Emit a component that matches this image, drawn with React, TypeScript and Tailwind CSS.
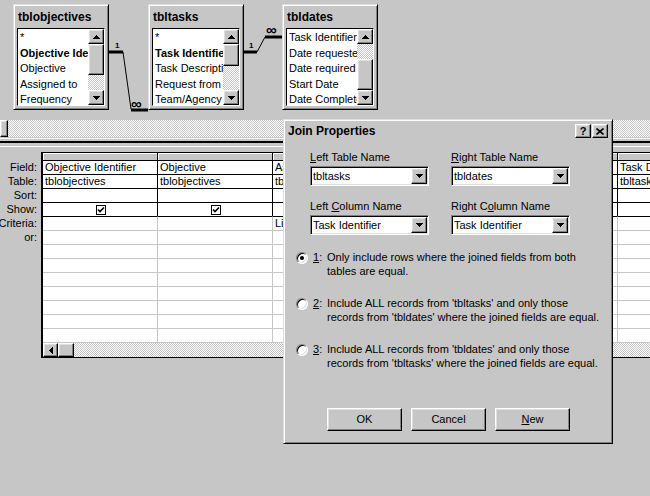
import type { ReactNode } from 'react'

// Win95-style bevels
const raised =
    'border border-t-white border-l-white border-r-black border-b-black shadow-[inset_-1px_-1px_#808080,inset_1px_1px_#dfdfdf]'
const sunken =
    'border border-t-[#808080] border-l-[#808080] border-r-white border-b-white shadow-[inset_1px_1px_#000,inset_-1px_-1px_#dfdfdf]'
const windowEdge =
    'border border-t-[#dfdfdf] border-l-[#dfdfdf] border-r-black border-b-black shadow-[inset_1px_1px_#fff,inset_-1px_-1px_#808080]'
const checker = 'bg-[repeating-conic-gradient(#ffffff_0%_25%,#c6c6c6_0%_50%)] bg-size-[2px_2px]'

function Arrow({ dir }: { dir: 'up' | 'down' | 'left' }) {
    if (dir === 'left') {
        return (
            <svg width="4" height="7" viewBox="0 0 4 7" shapeRendering="crispEdges">
                <polygon points="4,0 4,7 0,3.5" fill="#000" />
            </svg>
        )
    }
    return (
        <svg width="7" height="4" viewBox="0 0 7 4" shapeRendering="crispEdges">
            <polygon points={dir === 'up' ? '3.5,0 7,4 0,4' : '0,0 7,0 3.5,4'} fill="#000" />
        </svg>
    )
}

interface TableBoxProps {
    className: string
    title: string
    fields: string[]
    boldIndex?: number
    // heights: track above thumb, thumb, track below thumb
    track: [number, number, number]
}

function TableBox({ className, title, fields, boldIndex, track }: TableBoxProps) {
    const [before, thumb, after] = track
    return (
        <div className={`absolute top-[4px] w-[96px] bg-[#c6c6c6] px-[3px] pb-[3px] ${windowEdge} ${className}`}>
            <div className="h-[23px] pl-[1px] pt-[5px] text-[12px] font-bold leading-[14px]">{title}</div>
            <div className="flex h-[78px] border border-t-black border-l-black border-r-white border-b-white bg-white">
                <div className="min-w-0 flex-1 overflow-hidden pt-[1px]">
                    {fields.map((f, i) => (
                        <div
                            key={f}
                            className={`h-[15.5px] whitespace-nowrap pl-[2px] leading-[15.5px] ${i === boldIndex ? 'font-bold' : ''}`}
                        >
                            {f}
                        </div>
                    ))}
                </div>
                <div className="flex w-[16px] flex-col">
                    <div className={`flex h-[15px] items-center justify-center bg-[#c6c6c6] ${raised}`}>
                        <Arrow dir="up" />
                    </div>
                    <div className={checker} style={{ height: before }} />
                    <div className={`bg-[#c6c6c6] ${raised}`} style={{ height: thumb }} />
                    <div className={checker} style={{ height: after }} />
                    <div className={`flex h-[15px] items-center justify-center bg-[#c6c6c6] ${raised}`}>
                        <Arrow dir="down" />
                    </div>
                </div>
            </div>
        </div>
    )
}

function UpperPane() {
    return (
        <div className="relative h-[120px]">
            {/* join lines between the tables */}
            <svg className="absolute left-0 top-0" width="650" height="120">
                <g stroke="#000" fill="none">
                    <path d="M108 52H123" strokeWidth="3" />
                    <path d="M123 52L131 109" strokeWidth="1" />
                    <path d="M131 110H148" strokeWidth="3" />
                    <path d="M242 52H257" strokeWidth="3" />
                    <path d="M257 52L265 37" strokeWidth="1" />
                    <path d="M265 37H282" strokeWidth="3" />
                </g>
                <g fontFamily="Liberation Sans, Arial, sans-serif" fontWeight="bold" fill="#000">
                    <text x="115" y="48" fontSize="8">1</text>
                    <text x="249" y="48" fontSize="8">1</text>
                    <text x="131" y="109" fontSize="15">∞</text>
                    <text x="266" y="35" fontSize="15">∞</text>
                </g>
            </svg>
            <TableBox
                className="left-[13px]"
                title="tblobjectives"
                fields={['*', 'Objective Identifier', 'Objective', 'Assigned to', 'Frequency']}
                boldIndex={1}
                track={[0, 31, 15]}
            />
            <TableBox
                className="left-[148px]"
                title="tbltasks"
                fields={['*', 'Task Identifier', 'Task Description', 'Request from', 'Team/Agency']}
                boldIndex={1}
                track={[0, 22, 24]}
            />
            <TableBox
                className="left-[282px]"
                title="tbldates"
                fields={['Task Identifier', 'Date requested', 'Date required', 'Start Date', 'Date Completed']}
                track={[15, 31, 0]}
            />
        </div>
    )
}

type Cell = string | { check: true }
const check: Cell = { check: true }

const gridRows: { label: string; cells: Cell[] }[] = [
    { label: 'Field:', cells: ['Objective Identifier', 'Objective', 'Assigned to', 'Task Identifier', 'Date requested', 'Task Description'] },
    { label: 'Table:', cells: ['tblobjectives', 'tblobjectives', 'tblobjectives', 'tbltasks', 'tbldates', 'tbltasks'] },
    { label: 'Sort:', cells: [] },
    { label: 'Show:', cells: [check, check, check, check, check, check] },
    { label: 'Criteria:', cells: ['', '', 'Like "*"'] },
    { label: 'or:', cells: [] },
    { label: '', cells: [] },
    { label: '', cells: [] },
    { label: '', cells: [] },
    { label: '', cells: [] },
    { label: '', cells: [] },
    { label: '', cells: [] },
    { label: '', cells: [] },
]

const cols = [0, 1, 2, 3, 4, 5]
const colGrid = 'grid grid-cols-[115px_115px_115px_115px_115px_115px]'

function lineStyle(row: number) {
    if (row <= 3) return 'border-t-black border-r-black'
    if (row === 4) return 'border-t-black border-r-[#c6c6c6]'
    return 'border-t-[#c6c6c6] border-r-[#c6c6c6]'
}

function CheckBox() {
    return (
        <div className="flex h-[10px] w-[10px] items-center justify-center border border-black bg-white">
            <svg width="8" height="8" viewBox="0 0 8 8">
                <path d="M1 3.5L3 5.5L7 1.5" stroke="#000" strokeWidth="1.6" fill="none" />
            </svg>
        </div>
    )
}

function QueryGrid() {
    return (
        <div className="flex">
            <div className="w-[41px] shrink-0 pt-[8px]">
                {gridRows.map((r, i) => (
                    <div key={i} className="flex h-[14px] justify-end overflow-hidden pr-[4px] pt-[1px] leading-[13px]">
                        <span className="shrink-0 whitespace-nowrap">{r.label}</span>
                    </div>
                ))}
            </div>
            <div className="min-w-0 flex-1 overflow-hidden border-l-2 border-black">
                <div className={colGrid}>
                    {cols.map((c) => (
                        <div key={c} className="h-[8px] border-t border-r border-black bg-[#c6c6c6] shadow-[inset_1px_1px_#fff]" />
                    ))}
                </div>
                {gridRows.map((r, i) => (
                    <div key={i} className={colGrid}>
                        {cols.map((c) => {
                            const cell = r.cells[c]
                            return (
                                <div
                                    key={c}
                                    className={`flex h-[14px] items-center overflow-hidden whitespace-nowrap border-t border-r bg-white pl-[2px] leading-[13px] ${lineStyle(i)} ${
                                        typeof cell === 'object' ? 'justify-center' : ''
                                    }`}
                                >
                                    {typeof cell === 'object' ? <CheckBox /> : cell}
                                </div>
                            )
                        })}
                    </div>
                ))}
                <div className={`flex h-[16px] border-t border-b border-t-[#c6c6c6] border-b-black ${checker}`}>
                    <div className={`flex w-[15px] items-center justify-center bg-[#c6c6c6] ${raised}`}>
                        <Arrow dir="left" />
                    </div>
                    <div className={`w-[16px] bg-[#c6c6c6] ${raised}`} />
                </div>
            </div>
        </div>
    )
}

function Combo({ value }: { value: string }) {
    return (
        <div className={`mt-[2px] flex h-[20px] w-[119px] items-center bg-white ${sunken}`}>
            <span className="min-w-0 flex-1 overflow-hidden whitespace-nowrap pl-[2px] leading-[16px]">{value}</span>
            <div className={`mr-[1px] flex h-[16px] w-[16px] items-center justify-center bg-[#c6c6c6] ${raised}`}>
                <Arrow dir="down" />
            </div>
        </div>
    )
}

function Label({ children }: { children: ReactNode }) {
    return <div className="h-[13px] whitespace-nowrap leading-[13px]">{children}</div>
}

function Radio({ n, checked, lines, className = '' }: { n: string; checked?: boolean; lines: string[]; className?: string }) {
    return (
        <div className={`flex items-start pl-[10px] ${className}`}>
            <div className={`mt-[2px] flex h-[12px] w-[12px] shrink-0 items-center justify-center rounded-full bg-white ${sunken}`}>
                {checked && <div className="h-[4px] w-[4px] rounded-full bg-black" />}
            </div>
            <span className="ml-[5px] w-[14px] shrink-0 leading-[14px]">
                <span className="underline">{n}</span>:
            </span>
            <div className="leading-[14px]">
                {lines.map((l) => (
                    <div key={l} className="whitespace-nowrap">
                        {l}
                    </div>
                ))}
            </div>
        </div>
    )
}

function Button({ children }: { children: ReactNode }) {
    return (
        <div className={`flex h-[23px] w-[75px] items-center justify-center bg-[#c6c6c6] ${raised}`}>{children}</div>
    )
}

function JoinDialog() {
    return (
        <div className={`absolute left-[283px] top-[119px] h-[325px] w-[330px] bg-[#c6c6c6] p-[2px] ${windowEdge}`}>
            {/* Title bar */}
            <div className="flex h-[18px] items-center justify-between pl-[2px] pr-[2px]">
                <span className="text-[12px] font-bold">Join Properties</span>
                <div className="flex gap-[1px]">
                    <div className={`flex h-[14px] w-[16px] items-center justify-center bg-[#c6c6c6] text-[11px] font-bold leading-none ${raised}`}>
                        ?
                    </div>
                    <div className={`flex h-[14px] w-[16px] items-center justify-center bg-[#c6c6c6] ${raised}`}>
                        <svg width="8" height="7" viewBox="0 0 8 7">
                            <path d="M0.5 0.5L7.5 6.5M7.5 0.5L0.5 6.5" stroke="#000" strokeWidth="1.6" />
                        </svg>
                    </div>
                </div>
            </div>

            {/* Table / column pickers */}
            <div className="grid grid-cols-[141px_141px] pl-[24px] pt-[11px]">
                <div>
                    <Label>
                        <span className="underline">L</span>eft Table Name
                    </Label>
                    <Combo value="tbltasks" />
                </div>
                <div>
                    <Label>
                        <span className="underline">R</span>ight Table Name
                    </Label>
                    <Combo value="tbldates" />
                </div>
                <div className="mt-[14px]">
                    <Label>
                        Left <span className="underline">C</span>olumn Name
                    </Label>
                    <Combo value="Task Identifier" />
                </div>
                <div className="mt-[14px]">
                    <Label>
                        Right C<span className="underline">o</span>lumn Name
                    </Label>
                    <Combo value="Task Identifier" />
                </div>
            </div>

            {/* Join type options */}
            <Radio
                className="mt-[15px]"
                n="1"
                checked
                lines={['Only include rows where the joined fields from both', 'tables are equal.']}
            />
            <Radio
                className="mt-[18px]"
                n="2"
                lines={["Include ALL records from 'tbltasks' and only those", "records from 'tbldates' where the joined fields are equal."]}
            />
            <Radio
                className="mt-[18px]"
                n="3"
                lines={["Include ALL records from 'tbldates' and only those", "records from 'tbltasks' where the joined fields are equal."]}
            />

            <div className="mt-[38px] flex gap-[9px] pl-[41px]">
                <Button>OK</Button>
                <Button>Cancel</Button>
                <Button>
                    <span className="underline">N</span>ew
                </Button>
            </div>
        </div>
    )
}

export default function App() {
    return (
        <div className="relative h-[496px] w-[650px] overflow-hidden bg-[#c6c6c6] font-['Liberation_Sans',Arial,sans-serif] text-[11px] text-black">
            <UpperPane />

            {/* horizontal splitter between the table pane and the grid */}
            <div className={`flex h-[17px] ${checker}`}>
                <div className={`h-full w-[8px] bg-[#c6c6c6] ${raised}`} />
            </div>
            <div className="flex h-[15px] flex-col">
                <div className="mt-[1px] h-[1px] bg-white" />
                <div className="mt-[2px] h-[2px] bg-black" />
                <div className="mt-[3px] h-[1px] bg-white" />
            </div>

            <QueryGrid />
            <JoinDialog />
        </div>
    )
}
